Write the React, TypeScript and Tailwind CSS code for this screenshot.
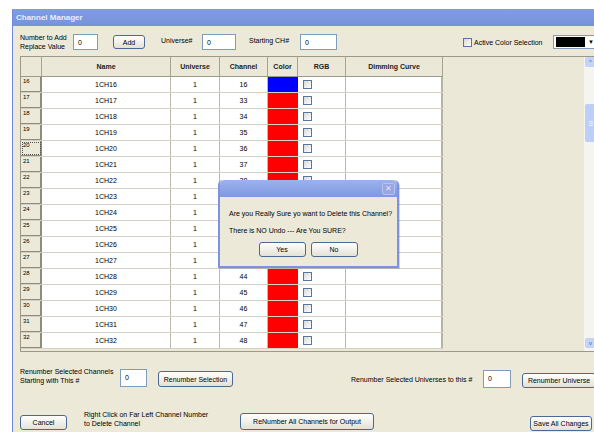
import React from "react";

type Row = { id: number; name: string; universe: number; channel: number; color: string };

const rows: Row[] = Array.from({ length: 17 }, (_, i) => {
  const id = 16 + i;
  return {
    id,
    name: `1CH${id}`,
    universe: 1,
    channel: id === 16 ? 16 : id + 16,
    color: id === 16 ? "bg-[#0000ff]" : "bg-[#ff0000]",
  };
});

function XpButton({ label, className = "" }: { label: string; className?: string }) {
  return (
    <div
      className={`flex items-center justify-center rounded-[3px] border border-[#4a6a93] bg-gradient-to-b from-white to-[#e4e1d4] text-black ${className}`}
    >
      {label}
    </div>
  );
}

function TextBox({ value, className = "" }: { value: string; className?: string }) {
  return (
    <div className={`border border-[#7f9db9] bg-white pl-[4px] ${className}`}>{value}</div>
  );
}

function CheckBox({ className = "" }: { className?: string }) {
  return (
    <div
      className={`h-[9px] w-[9px] border border-[#5478a6] bg-gradient-to-br from-[#d9d9d2] to-white ${className}`}
    />
  );
}

function HeaderCell({ label, w }: { label: string; w: string }) {
  return (
    <div
      className={`${w} flex h-full items-center justify-center border-r border-[#a7a391] font-bold text-[#222]`}
    >
      {label}
    </div>
  );
}

function GridRow({ row }: { row: Row }) {
  const cell = "flex h-full items-center justify-center border-r border-[#bdb9a8]";
  return (
    <div className="flex h-[16px] border-b border-[#d4d0c4]">
      <div
        className={`w-[21px] h-full border-r-2 border-b border-[#8e8b7c] bg-[#ece9d8] pl-[2px] pt-[1px] text-[6px] leading-none ${
          row.id === 20 ? "outline outline-1 outline-dotted outline-[#555] -outline-offset-2" : ""
        }`}
      >
        {row.id}
      </div>
      <div className={`${cell} w-[129px] bg-white`}>{row.name}</div>
      <div className={`${cell} w-[49px] bg-white`}>{row.universe}</div>
      <div className={`${cell} w-[48px] bg-white`}>{row.channel}</div>
      <div className={`w-[30px] h-full ${row.color}`} />
      <div className="flex h-full w-[48px] items-center border-r border-[#bdb9a8] bg-white pl-[5px]">
        <CheckBox />
      </div>
      <div className="w-[97px] h-full border-r-2 border-[#b8b4a2] bg-white" />
    </div>
  );
}

function ScrollBar() {
  return (
    <div className="flex h-full w-[12px] flex-col bg-[#f5f4ef] pl-[1px]">
      <div className="flex h-[10px] items-center justify-center rounded-[2px] bg-[#c3d4fb] text-[6px] leading-none text-[#4d6185]">
        ^
      </div>
      <div className="mt-[37px] flex h-[38px] flex-col items-center justify-center gap-[1px] rounded-[2px] bg-[#bccff9]">
        <div className="h-px w-[4px] bg-[#e8efff]" />
        <div className="h-px w-[4px] bg-[#e8efff]" />
        <div className="h-px w-[4px] bg-[#e8efff]" />
      </div>
      <div className="flex-1" />
      <div className="mb-[3px] flex h-[10px] items-center justify-center rounded-[2px] bg-[#c3d4fb] text-[6px] leading-none text-[#4d6185]">
        v
      </div>
    </div>
  );
}

function ConfirmDialog() {
  return (
    <div className="absolute left-[218px] top-[180px] flex h-[88px] w-[181px] flex-col rounded-t-[5px] border-2 border-t-0 border-[#7d92e0] bg-[#ece9d8] shadow-[1px_1px_0_rgba(0,0,0,0.15)]">
      <div className="flex h-[17px] items-center justify-end rounded-t-[5px] bg-gradient-to-b from-[#9cb2ec] to-[#7f98e3] pr-[2px]">
        <div className="flex h-[12px] w-[13px] items-center justify-center rounded-[2px] border border-[#b7c2ee] bg-[#9aa6e2] text-[8px] leading-none text-[#dfe4fa]">
          ✕
        </div>
      </div>
      <div className="pl-[9px] pt-[8px] leading-[17px]">
        <div>Are you Really Sure yo want to Delete this Channel?</div>
        <div>There is NO Undo --- Are You SURE?</div>
      </div>
      <div className="mt-[3px] flex justify-center gap-[5px] pr-[1px]">
        <XpButton label="Yes" className="h-[15px] w-[47px]" />
        <XpButton label="No" className="h-[15px] w-[47px]" />
      </div>
    </div>
  );
}

export default function App() {
  return (
    <div
      className="relative h-[432px] w-[594px] overflow-hidden bg-white text-[7px] leading-[9px] text-black"
      style={{ fontFamily: '"Liberation Sans", Arial, sans-serif' }}
    >
      <div className="ml-[12px] mt-[9px] flex h-[423px] w-[600px] flex-col border-l border-[#7189d6] bg-[#ece9d8]">
        {/* caption */}
        <div className="flex h-[17px] items-center bg-gradient-to-b from-[#809de2] to-[#7692dc] pl-[3px] text-[8px] font-bold text-[#e9eefc]">
          Channel Manager
        </div>

        <div className="flex flex-1 flex-col pl-[7px]">
          {/* toolbar */}
          <div className="mt-[8px] flex h-[16px] items-center">
            <div className="w-[53px] leading-[9px]">
              Number to Add
              <br />
              Replace Value
            </div>
            <TextBox value="0" className="h-[16px] w-[25px] pt-[3px]" />
            <XpButton label="Add" className="ml-[15px] h-[14px] w-[32px]" />
            <div className="ml-[16px] -mt-[3px] w-[41px]">Universe#</div>
            <TextBox value="0" className="h-[16px] w-[34px] pt-[3px]" />
            <div className="ml-[13px] -mt-[3px] w-[51px]">Starting CH#</div>
            <TextBox value="0" className="h-[16px] w-[37px] pt-[3px]" />
            <CheckBox className="ml-[126px]" />
            <div className="ml-[2px] w-[79px] whitespace-nowrap">Active Color Selection</div>
            <div className="flex h-[14px] w-[44px] shrink-0 items-center border border-[#7f9db9] bg-white pl-[2px]">
              <div className="h-[10px] w-[29px] bg-black" />
              <div className="ml-[3px] text-[6px] leading-none">▼</div>
            </div>
          </div>

          {/* channel grid */}
          <div className="mt-[6px] flex h-[296px] w-[577px] overflow-hidden border border-[#9c998a] bg-[#ebe8d8]">
            <div className="flex flex-col">
              <div className="flex h-[20px] border-b border-[#9c998a] bg-[#ebe8d8]">
                <div className="w-[21px] h-full border-r border-[#a7a391]" />
                <HeaderCell label="Name" w="w-[129px]" />
                <HeaderCell label="Universe" w="w-[49px]" />
                <HeaderCell label="Channel" w="w-[48px]" />
                <HeaderCell label="Color" w="w-[30px]" />
                <HeaderCell label="RGB" w="w-[48px]" />
                <HeaderCell label="Dimming Curve" w="w-[97px]" />
              </div>
              {rows.map((r) => (
                <GridRow key={r.id} row={r} />
              ))}
            </div>
            <div className="flex-1" />
            <ScrollBar />
          </div>

          {/* renumber controls */}
          <div className="mt-[14px] flex h-[22px] items-start">
            <div className="mt-[1px] w-[100px]">
              Renumber Selected Channels
              <br />
              Starting with This #
            </div>
            <TextBox value="0" className="mt-[3px] h-[18px] w-[27px] pt-[3px]" />
            <XpButton label="Renumber Selection" className="ml-[11px] mt-[5px] h-[16px] w-[75px]" />
            <div className="ml-[118px] mt-[9px] w-[132px]">Renumber Selected Universes to this #</div>
            <TextBox value="0" className="mt-[4px] h-[18px] w-[28px] pt-[3px]" />
            <XpButton label="Renumber Universe" className="ml-[11px] mt-[7px] h-[15px] w-[74px]" />
          </div>

          <div className="mt-[21px] flex items-start">
            <XpButton label="Cancel" className="mt-[6px] h-[15px] w-[47px]" />
            <div className="ml-[17px] w-[140px] leading-[9px] mt-[1px]">
              Right Click on Far Left Channel Number
              <br />
              to Delete Channel
            </div>
            <XpButton label="ReNumber All Channels for Output" className="ml-[16px] mt-[4px] h-[17px] w-[134px]" />
            <XpButton label="Save All Changes" className="ml-[156px] mt-[7px] h-[15px] w-[62px]" />
          </div>
        </div>
      </div>

      <ConfirmDialog />
    </div>
  );
}
